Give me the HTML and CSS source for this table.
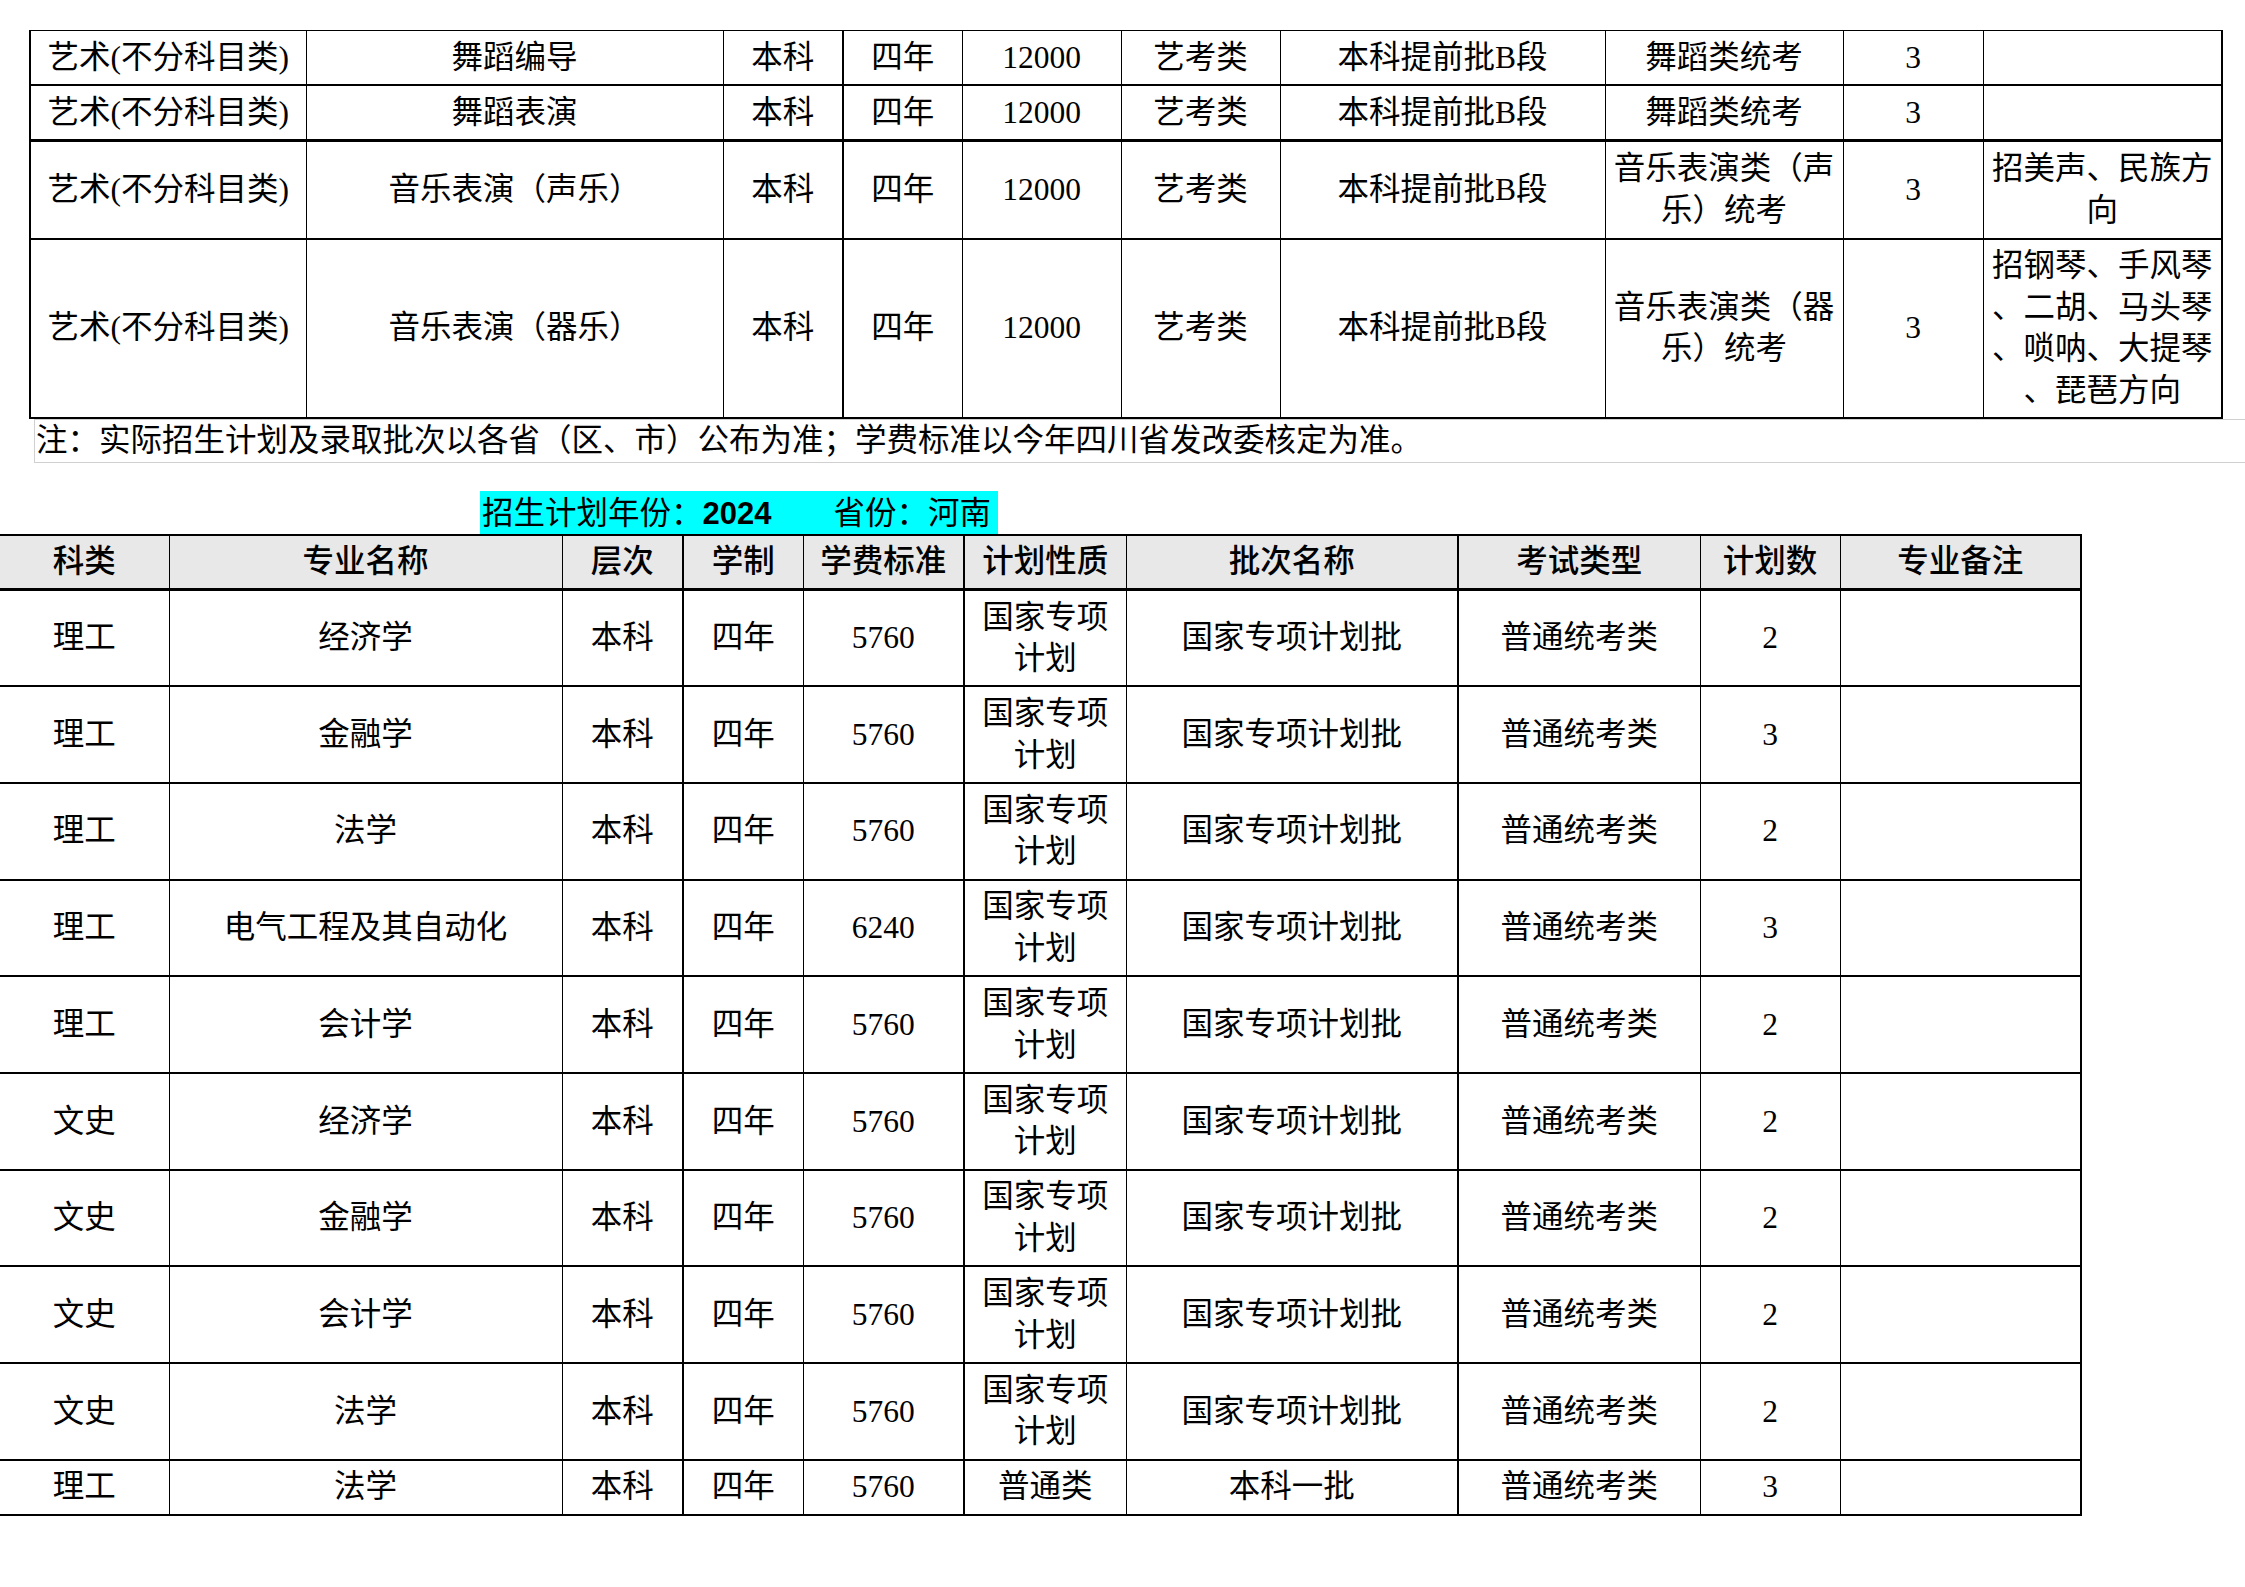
FILE: index.html
```html
<!DOCTYPE html>
<html lang="zh-CN">
<head>
<meta charset="utf-8">
<title>招生计划</title>
<link rel="stylesheet" href="styles.css">
</head>
<body>
<div class="page">
  <table class="plan plan-top">
    <colgroup>
      <col style="width:276px"><col style="width:417px"><col style="width:120px"><col style="width:119px"><col style="width:159px"><col style="width:159px"><col style="width:325px"><col style="width:238px"><col style="width:140px"><col style="width:239px">
    </colgroup>
    <tr class="r-a">
      <td>艺术(不分科目类)</td><td>舞蹈编导</td><td>本科</td><td>四年</td><td>12000</td><td>艺考类</td><td>本科提前批B段</td><td>舞蹈类统考</td><td>3</td><td></td>
    </tr>
    <tr class="r-b">
      <td>艺术(不分科目类)</td><td>舞蹈表演</td><td>本科</td><td>四年</td><td>12000</td><td>艺考类</td><td>本科提前批B段</td><td>舞蹈类统考</td><td>3</td><td></td>
    </tr>
    <tr class="r-c">
      <td>艺术(不分科目类)</td><td>音乐表演（声乐）</td><td>本科</td><td>四年</td><td>12000</td><td>艺考类</td><td>本科提前批B段</td><td>音乐表演类（声<br>乐）统考</td><td>3</td><td>招美声、民族方<br>向</td>
    </tr>
    <tr class="r-d">
      <td>艺术(不分科目类)</td><td>音乐表演（器乐）</td><td>本科</td><td>四年</td><td>12000</td><td>艺考类</td><td>本科提前批B段</td><td>音乐表演类（器<br>乐）统考</td><td>3</td><td class="nowrap">招钢琴、手风琴<br>、二胡、马头琴<br>、唢呐、大提琴<br>、琵琶方向</td>
    </tr>
  </table>
  <div class="note">注：实际招生计划及录取批次以各省（区、市）公布为准；学费标准以今年四川省发改委核定为准。</div>

  <div class="title-row">
    <span class="title">招生计划年份：<b class="year">2024</b><span class="prov">省份：河南</span></span>
  </div>

  <table class="plan plan-main">
    <colgroup>
      <col style="width:169px"><col style="width:393px"><col style="width:121px"><col style="width:120px"><col style="width:161px"><col style="width:162px"><col style="width:332px"><col style="width:242px"><col style="width:140px"><col style="width:241px">
    </colgroup>
    <tr class="head">
      <th>科类</th><th>专业名称</th><th>层次</th><th>学制</th><th>学费标准</th><th>计划性质</th><th>批次名称</th><th>考试类型</th><th>计划数</th><th>专业备注</th>
    </tr>
    <tr class="row"><td>理工</td><td>经济学</td><td>本科</td><td>四年</td><td>5760</td><td>国家专项<br>计划</td><td>国家专项计划批</td><td>普通统考类</td><td>2</td><td></td></tr>
    <tr class="row"><td>理工</td><td>金融学</td><td>本科</td><td>四年</td><td>5760</td><td>国家专项<br>计划</td><td>国家专项计划批</td><td>普通统考类</td><td>3</td><td></td></tr>
    <tr class="row"><td>理工</td><td>法学</td><td>本科</td><td>四年</td><td>5760</td><td>国家专项<br>计划</td><td>国家专项计划批</td><td>普通统考类</td><td>2</td><td></td></tr>
    <tr class="row"><td>理工</td><td>电气工程及其自动化</td><td>本科</td><td>四年</td><td>6240</td><td>国家专项<br>计划</td><td>国家专项计划批</td><td>普通统考类</td><td>3</td><td></td></tr>
    <tr class="row"><td>理工</td><td>会计学</td><td>本科</td><td>四年</td><td>5760</td><td>国家专项<br>计划</td><td>国家专项计划批</td><td>普通统考类</td><td>2</td><td></td></tr>
    <tr class="row"><td>文史</td><td>经济学</td><td>本科</td><td>四年</td><td>5760</td><td>国家专项<br>计划</td><td>国家专项计划批</td><td>普通统考类</td><td>2</td><td></td></tr>
    <tr class="row"><td>文史</td><td>金融学</td><td>本科</td><td>四年</td><td>5760</td><td>国家专项<br>计划</td><td>国家专项计划批</td><td>普通统考类</td><td>2</td><td></td></tr>
    <tr class="row"><td>文史</td><td>会计学</td><td>本科</td><td>四年</td><td>5760</td><td>国家专项<br>计划</td><td>国家专项计划批</td><td>普通统考类</td><td>2</td><td></td></tr>
    <tr class="row"><td>文史</td><td>法学</td><td>本科</td><td>四年</td><td>5760</td><td>国家专项<br>计划</td><td>国家专项计划批</td><td>普通统考类</td><td>2</td><td></td></tr>
    <tr class="row-short"><td>理工</td><td>法学</td><td>本科</td><td>四年</td><td>5760</td><td>普通类</td><td>本科一批</td><td>普通统考类</td><td>3</td><td></td></tr>
  </table>
</div>
</body>
</html>
```

FILE: styles.css
```css
html, body {
  margin: 0;
  padding: 0;
  background: #ffffff;
}

body {
  font-family: "Liberation Serif", "Noto Sans CJK SC", serif;
  color: #000000;
  font-size: 31.5px;
  overflow: hidden;
}

.page {
  padding-top: 30px;
  width: 2245px;
}

.plan {
  border-collapse: collapse;
  table-layout: fixed;
}

.plan td,
.plan th {
  padding: 0;
  text-align: center;
  vertical-align: middle;
  line-height: 41.5px;
  border: 1px solid #000;
  font-weight: 400;
  overflow: hidden;
}

.nowrap {
  white-space: nowrap;
}

/* ---------- top table ---------- */
.plan-top {
  margin-left: 29px;
  width: 2192px;
}

.plan-top tr:first-child td {
  border-top-width: 1px;
}

.plan-top td {
  border-bottom-width: 2px;
}

.plan-top td:first-child {
  border-left-width: 2px;
}

.plan-top td:last-child {
  border-right-width: 2px;
}

.plan-top td:nth-child(3) {
  border-right-width: 2px;
}

.plan-top .r-a { height: 54px; }
.plan-top .r-b { height: 56px; }
.plan-top .r-b td { border-bottom-width: 3px; }
.plan-top .r-c { height: 98px; }
.plan-top .r-d { height: 179px; }

/* ---------- note ---------- */
.note {
  margin-left: 34px;
  height: 42px;
  line-height: 42px;
  border-top: 1px solid #d0d0d0;
  border-left: 1px solid #d0d0d0;
  border-bottom: 1px solid #d0d0d0;
  padding-left: 1px;
  white-space: nowrap;
  font-size: 31.5px;
}

/* ---------- title ---------- */
.title-row {
  margin-top: 28px;
  padding-left: 480px;
  height: 43px;
}

.title {
  display: inline-block;
  width: 516px;
  height: 43px;
  line-height: 45px;
  padding-left: 2px;
  background: #00ffff;
  white-space: nowrap;
  font-size: 31.5px;
}

.year {
  font-family: "Liberation Sans", "Noto Sans CJK SC", sans-serif;
  font-weight: 700;
  font-size: 31px;
}

.prov {
  padding-left: 62px;
}

/* ---------- main table ---------- */
.plan-main {
  width: 2081px;
}

.plan-main td:first-child,
.plan-main th:first-child {
  border-left: none;
}

.plan-main td,
.plan-main th {
  border-bottom-width: 2px;
}

.plan-main .head th {
  background: #e8e8e8;
  border-top-width: 2px;
  border-bottom-width: 3px;
  font-weight: 500;
}

.plan-main td:nth-child(3),
.plan-main th:nth-child(3),
.plan-main td:nth-child(5),
.plan-main th:nth-child(5),
.plan-main td:nth-child(7),
.plan-main th:nth-child(7),
.plan-main td:last-child,
.plan-main th:last-child {
  border-right-width: 2px;
}

.plan-main .head { height: 55px; }
.plan-main .row { height: 96.7px; }
.plan-main .row-short { height: 55px; }
```
